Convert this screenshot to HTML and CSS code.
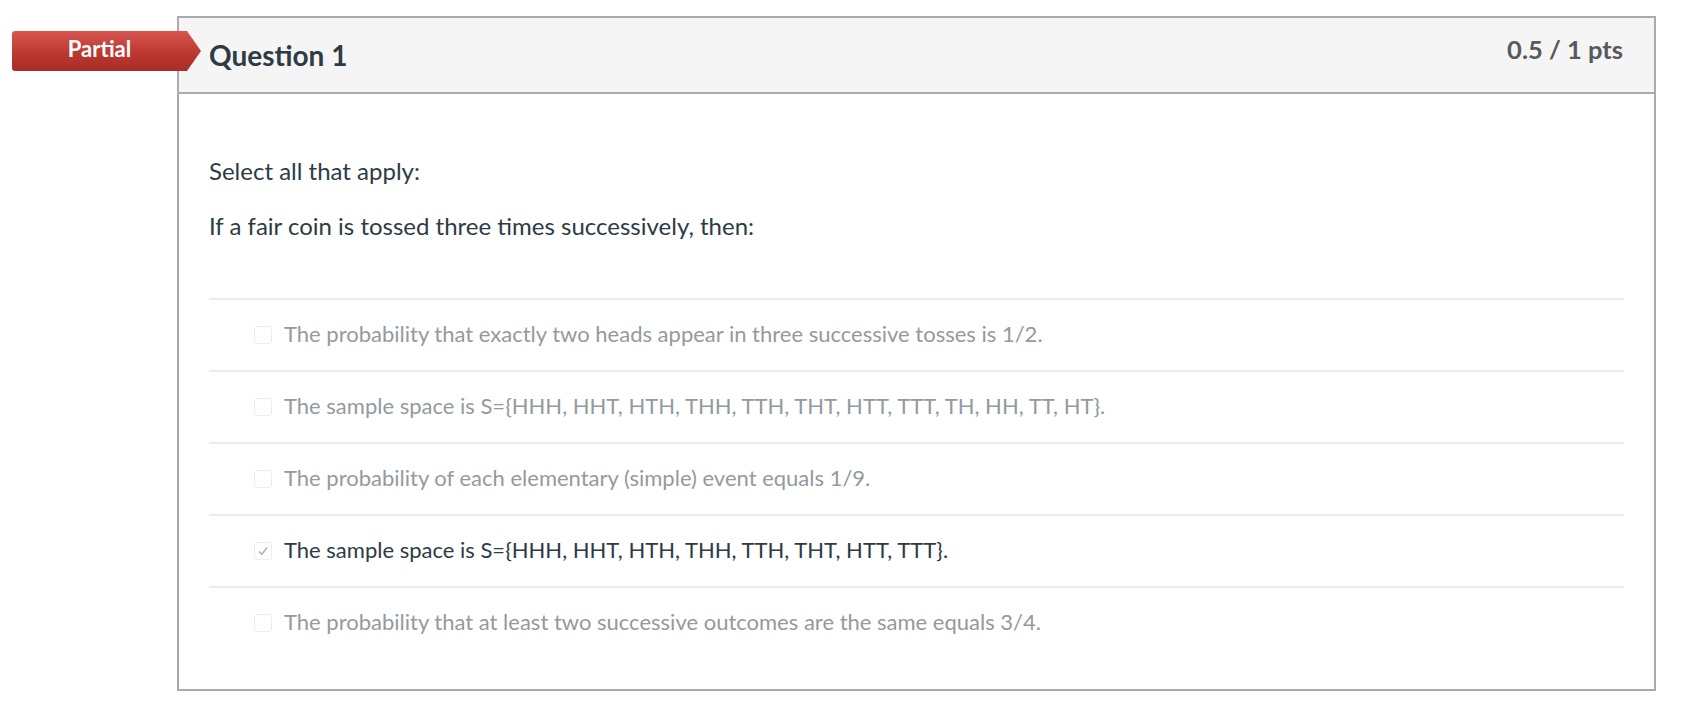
FILE: index.html
```html
<!DOCTYPE html>
<html>
<head>
<meta charset="utf-8">
<link rel="stylesheet" href="styles.css">
</head>
<body>
<div class="page">
  <div class="badge"><span>Partial</span></div>
  <div class="quiz">
    <div class="quiz-header">
      <div class="title">Question 1</div>
      <div class="points">0.5 / 1 pts</div>
    </div>
    <div class="quiz-body">
      <p class="prompt first">Select all that apply:</p>
      <p class="prompt">If a fair coin is tossed three times successively, then:</p>
      <div class="answers">
        <div class="answer"><span class="box"></span><span class="label">The probability that exactly two heads appear in three successive tosses is 1/2.</span></div>
        <div class="answer"><span class="box"></span><span class="label">The sample space is S={HHH, HHT, HTH, THH, TTH, THT, HTT, TTT, TH, HH, TT, HT}.</span></div>
        <div class="answer"><span class="box"></span><span class="label">The probability of each elementary (simple) event equals 1/9.</span></div>
        <div class="answer selected"><span class="box"><svg width="12" height="12" viewBox="0 0 12 12"><path d="M2 6.5 L4.8 9.2 L10 2.5" fill="none" stroke="#b4b4b4" stroke-width="1.6"/></svg></span><span class="label">The sample space is S={HHH, HHT, HTH, THH, TTH, THT, HTT, TTT}.</span></div>
        <div class="answer"><span class="box"></span><span class="label">The probability that at least two successive outcomes are the same equals 3/4.</span></div>
      </div>
    </div>
  </div>
</div>
</body>
</html>
```

FILE: styles.css
```css
html, body {
  margin: 0;
  padding: 0;
  background: #fff;
}
body {
  font-family: Lato, "Open Sans", sans-serif;
  color: #2d3b45;
}
.page {
  position: relative;
  padding-top: 16px;
}
.badge {
  position: absolute;
  left: 12px;
  top: 31px;
  width: 189px;
  height: 40px;
  background: linear-gradient(#d95650, #b9362f 60%, #a92d27);
  clip-path: polygon(0 0, 175px 0, 189px 50%, 175px 100%, 0 100%);
  border-radius: 3px 0 0 3px;
  display: flex;
  align-items: center;
}
.badge span {
  width: 175px;
  text-align: center;
  color: #fff;
  font-weight: 700;
  font-size: 22px;
  line-height: 1.2;
  margin-top: -3px;
}
.quiz {
  margin-left: 177px;
  width: 1479px;
  box-sizing: border-box;
  border: 2px solid #aaaaaa;
}
.quiz-header {
  height: 74px;
  background: #f5f5f5;
  border-bottom: 2px solid #aaaaaa;
  display: flex;
  justify-content: space-between;
  align-items: flex-start;
  padding: 0 31px 0 30px;
}
.title {
  font-size: 28px;
  font-weight: 700;
  line-height: 1.2;
  padding-top: 21px;
  color: #2d3b45;
}
.points {
  font-size: 25.5px;
  font-weight: 700;
  line-height: 1.2;
  padding-top: 16px;
  color: #555a5e;
}
.quiz-body {
  padding: 0 30px 31px 30px;
}
.prompt {
  margin: 26px 0 0 0;
  font-size: 24px;
  line-height: 1.2;
}
.prompt.first {
  margin-top: 63px;
}
.answers {
  margin-top: 57px;
}
.answer {
  height: 70px;
  border-top: 2px solid #ececec;
  display: flex;
  align-items: center;
  padding-left: 45px;
  font-size: 22px;
  line-height: 24px;
  color: #939aa0;
}
.answer .label {
  margin-top: -1px;
}
.answer .box {
  width: 16px;
  height: 16px;
  border: 1px solid #eeeeee;
  border-radius: 3px;
  margin-right: 12px;
  display: flex;
  align-items: center;
  justify-content: center;
  flex: none;
}
.answer.selected {
  color: #2d3b45;
}
```
